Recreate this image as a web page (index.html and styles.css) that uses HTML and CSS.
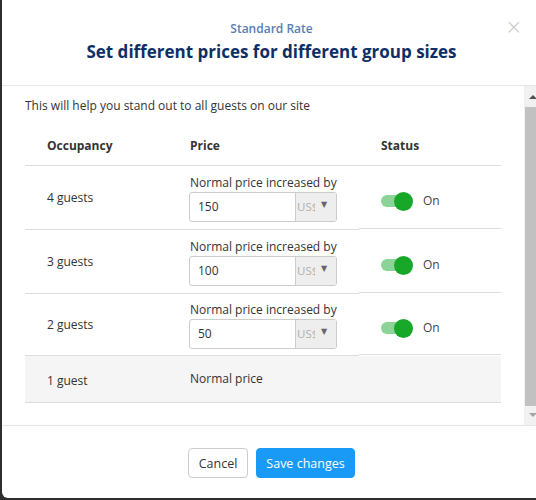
FILE: index.html
```html
<!DOCTYPE html>
<html>
<head>
<meta charset="utf-8">
<link rel="stylesheet" href="styles.css">
</head>
<body>
<div class="modal">
  <div class="modal-header">
    <div></div>
    <div class="titles">
      <div class="subtitle">Standard Rate</div>
      <h1 class="title">Set different prices for different group sizes</h1>
    </div>
    <div class="close">×</div>
  </div>
  <div class="modal-body">
    <div class="body-content">
      <p class="intro">This will help you stand out to all guests on our site</p>
      <div class="table">
        <div class="row head">
          <div class="cell">Occupancy</div>
          <div class="cell">Price</div>
          <div class="cell">Status</div>
        </div>
        <div class="row">
          <div class="cell">4 guests</div>
          <div class="cell price">
            <div class="plabel">Normal price increased by</div>
            <div class="igroup"><div class="ival">150</div><div class="isel"><span class="cur">US$</span><span class="caret">▼</span></div></div>
          </div>
          <div class="cell status"><span class="toggle"><span class="track"></span><span class="knob"></span></span><span class="on">On</span></div>
        </div>
        <div class="row">
          <div class="cell">3 guests</div>
          <div class="cell price">
            <div class="plabel">Normal price increased by</div>
            <div class="igroup"><div class="ival">100</div><div class="isel"><span class="cur">US$</span><span class="caret">▼</span></div></div>
          </div>
          <div class="cell status"><span class="toggle"><span class="track"></span><span class="knob"></span></span><span class="on">On</span></div>
        </div>
        <div class="row short">
          <div class="cell">2 guests</div>
          <div class="cell price">
            <div class="plabel">Normal price increased by</div>
            <div class="igroup"><div class="ival">50</div><div class="isel"><span class="cur">US$</span><span class="caret">▼</span></div></div>
          </div>
          <div class="cell status"><span class="toggle"><span class="track"></span><span class="knob"></span></span><span class="on">On</span></div>
        </div>
        <div class="row base">
          <div class="cell"><span class="guest1">1 guest</span></div>
          <div class="cell"><span class="normal">Normal price</span></div>
          <div class="cell"></div>
        </div>
      </div>
    </div>
    <div class="scrollbar">
      <div class="sb-btn"><span class="arrow-up"></span></div>
      <div class="sb-track"><div class="sb-thumb"></div></div>
      <div class="sb-btn"><span class="arrow-down"></span></div>
    </div>
  </div>
  <div class="modal-footer">
    <button class="btn btn-default">Cancel</button>
    <button class="btn btn-primary">Save changes</button>
  </div>
</div>
</body>
</html>
```
FILE: styles.css
```css
html, body {
  margin: 0;
  padding: 0;
  overflow: hidden;
}
body {
  background: #2e2e2e;
  width: 536px;
  height: 500px;
  font-family: "Open Sans", "Noto Sans", sans-serif;
  font-size: 12px;
  color: #333;
}
.modal {
  margin-left: 2px;
  width: 539px;
  height: 498px;
  background: #fff;
  border-radius: 0 0 6px 6px;
  display: flex;
  flex-direction: column;
}
.modal-header {
  height: 85px;
  border-bottom: 1px solid #e5e5e5;
  display: grid;
  grid-template-columns: 40px 1fr 40px;
  box-sizing: content-box;
}
.titles {
  text-align: center;
  padding-top: 20px;
}
.subtitle {
  color: #5a7db3;
  font-weight: 600;
  font-size: 12px;
  line-height: 18px;
}
.title {
  margin: 2px 0 0;
  color: #0e2f66;
  font-size: 17px;
  font-weight: 700;
  line-height: 24px;
}
.close {
  color: #c8c8c8;
  font-size: 21px;
  line-height: 20px;
  padding-top: 17px;
  padding-left: 4px;
  font-family: "DejaVu Sans", sans-serif;
  font-weight: 300;
}
.modal-body {
  height: 339px;
  display: flex;
  border-bottom: 1px solid #e5e5e5;
}
.body-content {
  flex: 1;
  overflow: hidden;
  padding: 11px 23px 0 23px;
}
.intro {
  margin: 0;
  line-height: 18px;
}
.table {
  margin-top: 12px;
  display: grid;
  grid-template-columns: 143px 191px 142px;
}
.row {
  display: contents;
}
.cell {
  padding-left: 22px;
  border-bottom: 1px solid #ddd;
  display: flex;
  align-items: center;
  line-height: 18px;
  height: 63px;
}
.row.head .cell {
  font-weight: 700;
  height: 38px;
}
.row.short .cell {
  height: 61px;
}
.price {
  flex-direction: column;
  align-items: flex-start;
  justify-content: center;
}
.plabel {
  font-size: 12px;
  line-height: 17px;
  margin-top: 1px;
}
.igroup {
  margin-top: 1px;
  margin-left: -1px;
  width: 148px;
  height: 30px;
  display: flex;
  border: 1px solid #ccc;
  border-radius: 3px;
  box-sizing: border-box;
  overflow: hidden;
}
.ival {
  flex: 1;
  padding-left: 8px;
  line-height: 28px;
}
.isel {
  width: 41px;
  flex: none;
  background: #eee;
  border-left: 1px solid #ccc;
  display: flex;
  align-items: center;
  padding-left: 1px;
  box-sizing: border-box;
}
.cur {
  color: #b0b0b0;
  width: 18px;
  overflow: hidden;
  white-space: nowrap;
  font-size: 11.5px;
  flex: none;
}
.caret {
  font-size: 8px;
  color: #666;
  margin-left: 6px;
  font-family: "DejaVu Sans", sans-serif;
  margin-top: -4px;
}
.status {
  padding-top: 8px;
  box-sizing: border-box;
}
.toggle {
  display: inline-flex;
  align-items: center;
  width: 32px;
  height: 20px;
}
.track {
  width: 24px;
  height: 12px;
  border-radius: 6px;
  background: #8cd398;
}
.knob {
  width: 19px;
  height: 19px;
  border-radius: 50%;
  background: #17a82a;
  margin-left: -11px;
}
.on {
  margin-left: 10px;
  color: #444;
}
.row.base .cell {
  background: #f5f5f5;
  height: 46px;
}
.guest1 {
  margin-top: 3px;
}
.normal {
  margin-top: -1px;
}
.scrollbar {
  width: 17px;
  background: #f1f1f1;
  display: flex;
  flex-direction: column;
}
.sb-btn {
  height: 21px;
  display: flex;
  align-items: center;
  justify-content: center;
}
.arrow-up {
  width: 0;
  height: 0;
  border-left: 4px solid transparent;
  border-right: 4px solid transparent;
  border-bottom: 4px solid #505050;
}
.arrow-down {
  width: 0;
  height: 0;
  border-left: 4px solid transparent;
  border-right: 4px solid transparent;
  border-top: 4px solid #a3a3a3;
}
.sb-track {
  flex: 1;
  display: flex;
  padding: 0 1px;
}
.sb-thumb {
  flex: 1;
  background: #c1c1c1;
  margin-bottom: -2px;
}
.modal-footer {
  flex: 1;
  display: flex;
  justify-content: center;
  align-items: flex-start;
  gap: 8px;
  padding-top: 22px;
}
.btn {
  height: 30px;
  border-radius: 4px;
  font-family: inherit;
  font-size: 12.5px;
  padding: 0;
  white-space: nowrap;
  cursor: pointer;
}
.btn-default {
  background: #fff;
  border: 1px solid #ccc;
  color: #333;
  width: 60px;
}
.btn-primary {
  background: #1a9af7;
  border: 1px solid #1a9af7;
  color: #fff;
  width: 99px;
}
```
